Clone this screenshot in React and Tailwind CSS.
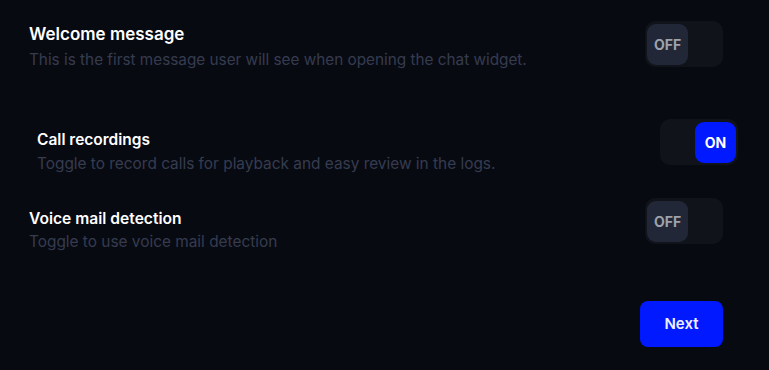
import React from "react";

function Toggle({ on }) {
  return (
    <div
      className={`flex h-[46px] w-[78px] shrink-0 items-center rounded-[10px] bg-[#11131a] px-[2px] ${
        on ? "justify-end" : "justify-start"
      }`}
    >
      <div
        className={`flex h-[41px] w-[41px] items-center justify-center rounded-[9px] text-[14px] font-bold ${
          on ? "bg-[#0019ff] text-white" : "bg-[#222737] text-[#9ea2ac]"
        }`}
      >
        {on ? "ON" : "OFF"}
      </div>
    </div>
  );
}

export default function App() {
  return (
    <div className="min-h-screen w-full bg-[#080a12] font-['Inter',sans-serif]">
      <div className="flex flex-col pl-[29px] pr-[46px] pt-[21px]">
        <div className="flex h-[46px] items-start justify-between">
          <div className="mt-[2px] flex flex-col">
            <div className="text-[17px] font-semibold leading-[22px] text-white">Welcome message</div>
            <div className="mt-[4px] text-[15.3px] leading-[22px] text-[#363c4f]">
              This is the first message user will see when opening the chat widget.
            </div>
          </div>
          <Toggle on={false} />
        </div>

        <div className="ml-[8px] mr-[-15px] mt-[52px] flex h-[46px] items-start justify-between">
          <div className="mt-[11px] flex flex-col">
            <div className="text-[15.5px] font-semibold leading-[20px] text-white">Call recordings</div>
            <div className="mt-[3px] text-[15.4px] leading-[22px] text-[#363c4f]">
              Toggle to record calls for playback and easy review in the logs.
            </div>
          </div>
          <Toggle on={true} />
        </div>

        <div className="mt-[33px] flex h-[46px] items-start justify-between">
          <div className="mt-[11px] flex flex-col">
            <div className="text-[15.6px] font-semibold leading-[20px] text-white">Voice mail detection</div>
            <div className="mt-[2px] text-[15.4px] leading-[22px] text-[#363c4f]">
              Toggle to use voice mail detection
            </div>
          </div>
          <Toggle on={false} />
        </div>

        <div className="mt-[57px] flex justify-end">
          <button className="flex h-[46px] w-[83px] items-center justify-center rounded-[8px] bg-[#0019ff] text-[15px] font-semibold text-[#eef0ff]">
            Next
          </button>
        </div>
      </div>
    </div>
  );
}
